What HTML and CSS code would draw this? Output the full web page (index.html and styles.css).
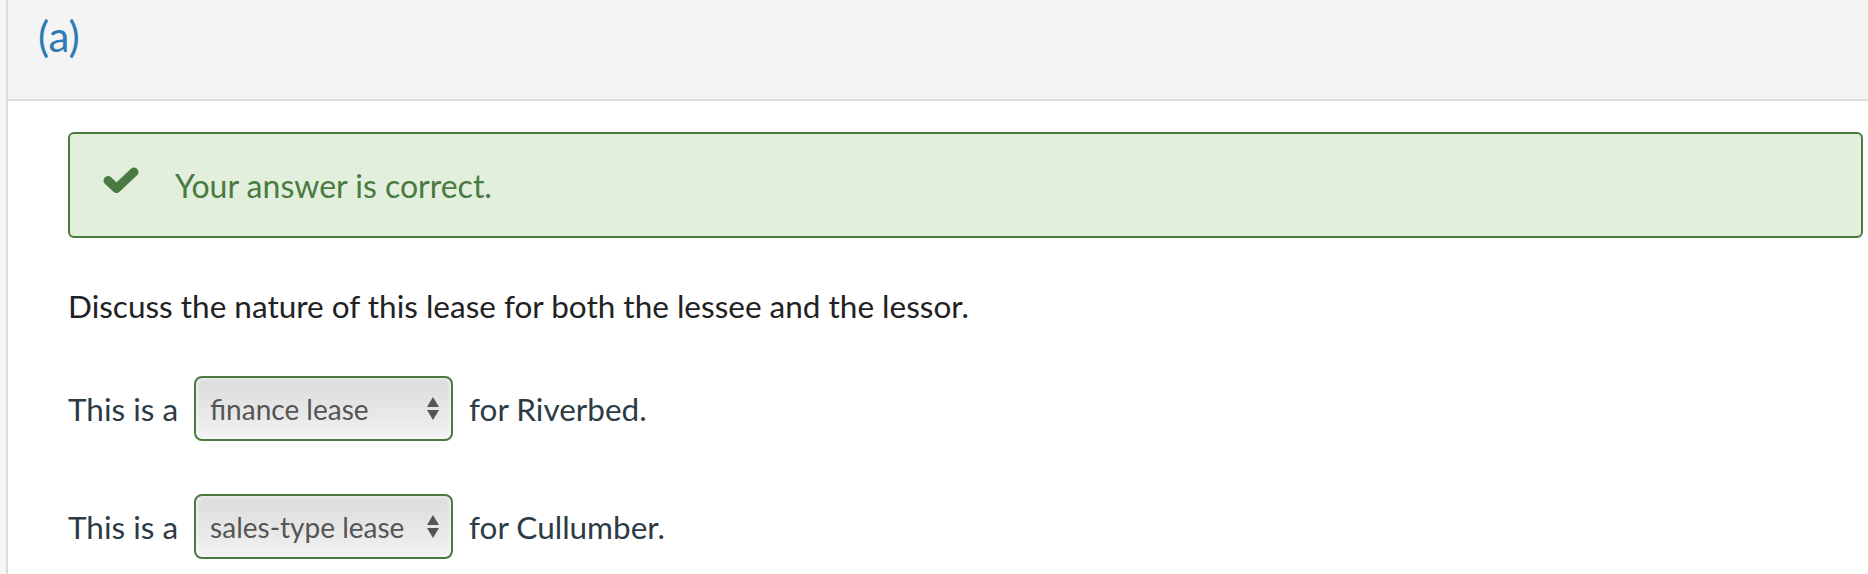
FILE: index.html
```html
<!DOCTYPE html>
<html lang="en">
<head>
<meta charset="utf-8">
<title>Question (a)</title>
<link rel="stylesheet" href="styles.css">
</head>
<body>
<div class="frame">
  <div class="part-header">
    <span class="part-label">(a)</span>
  </div>
  <div class="part-body">
    <div class="alert-correct">
      <svg class="check" viewBox="0 0 36 27" width="36" height="27" aria-hidden="true">
        <polyline points="5,13.5 13.5,21.5 31,5" fill="none" stroke="#4a7a41" stroke-width="9" stroke-linecap="round" stroke-linejoin="round"/>
      </svg>
      <span class="alert-text">Your answer is correct.</span>
    </div>
    <p class="prompt">Discuss the nature of this lease for both the lessee and the lessor.</p>
    <div class="answer-row">
      <span class="lead">This is a</span>
      <div class="select">
        <span class="select-value">finance lease</span>
        <span class="arrows"><span class="up"></span><span class="down"></span></span>
      </div>
      <span class="tail">for Riverbed.</span>
    </div>
    <div class="answer-row">
      <span class="lead">This is a</span>
      <div class="select">
        <span class="select-value">sales-type lease</span>
        <span class="arrows"><span class="up"></span><span class="down"></span></span>
      </div>
      <span class="tail">for Cullumber.</span>
    </div>
  </div>
</div>
</body>
</html>
```
FILE: styles.css
```css
html, body {
  margin: 0;
  padding: 0;
}
body {
  font-family: Lato, "Open Sans", sans-serif;
  padding-left: 6px;
  background: #f7f7f7;
}
.frame {
  border-left: 2px solid #dddddd;
  background: #ffffff;
  min-height: 574px;
}
.part-header {
  box-sizing: border-box;
  height: 101px;
  background: #f4f4f4;
  border-bottom: 2px solid #dddddd;
  padding-left: 30px;
  padding-top: 11px;
}
.part-label {
  font-size: 42px;
  color: #2f7bb3;
  line-height: 50px;
}
.part-body {
  padding: 31px 5px 0 60px;
}
.alert-correct {
  height: 106px;
  box-sizing: border-box;
  border: 2px solid #4b7a3f;
  border-radius: 6px;
  background: #e1efdc;
  display: flex;
  align-items: center;
  padding-left: 33px;
}
.check {
  display: block;
  margin-right: 36px;
  margin-bottom: 9px;
}
.alert-text {
  font-size: 32px;
  color: #4a7a41;
}
.prompt {
  margin: 48px 0 0 0;
  font-size: 31.5px;
  color: #222222;
  line-height: 40px;
}
.answer-row {
  display: flex;
  align-items: center;
  font-size: 31.5px;
  color: #2d3b45;
}
.prompt + .answer-row {
  margin-top: 50px;
}
.answer-row + .answer-row {
  margin-top: 53px;
}
.lead {
  margin-right: 16px;
}
.select {
  width: 259px;
  height: 65px;
  box-sizing: border-box;
  border: 2px solid #4b7a3f;
  border-radius: 8px;
  background: linear-gradient(#dcdcdc, #e9e9e9 65%, #f3f3f3);
  box-shadow: inset 0 0 5px rgba(255,255,255,0.95);
  display: flex;
  align-items: center;
  justify-content: space-between;
  padding: 0 12px 0 14px;
  margin-right: 16px;
}
.select-value {
  font-size: 28px;
  color: #555555;
}
.arrows {
  display: flex;
  flex-direction: column;
  gap: 3px;
}
.up, .down {
  width: 0;
  height: 0;
  border-left: 6px solid transparent;
  border-right: 6px solid transparent;
}
.up { border-bottom: 10px solid #555555; }
.down { border-top: 10px solid #555555; }
```
